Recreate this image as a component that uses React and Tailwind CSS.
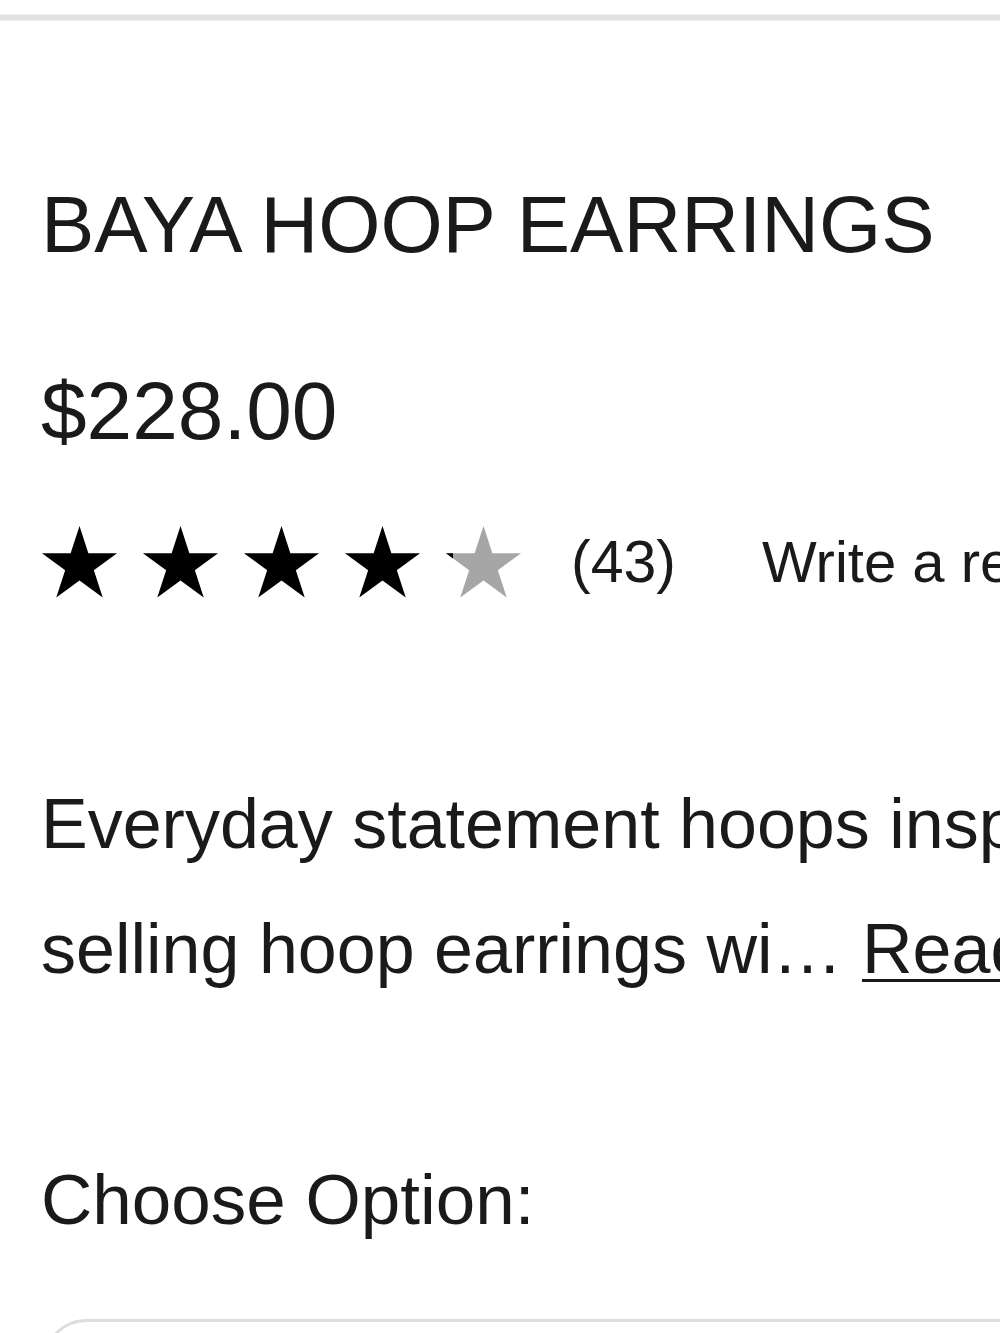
import React from "react";

const STAR_POINTS =
  "39.5,0 48.37,27.3 77.06,27.3 53.85,44.16 62.73,71.46 39.5,54.59 16.27,71.46 25.15,44.16 1.94,27.3 30.63,27.3";

function Star({ filled = true, partial = 0 }) {
  return (
    <svg width="79" height="72" viewBox="0 0 79 72" className="block shrink-0">
      {filled ? (
        <polygon points={STAR_POINTS} fill="#000" />
      ) : (
        <>
          <defs>
            <clipPath id="partial-clip">
              <rect x="0" y="0" width={partial} height="72" />
            </clipPath>
          </defs>
          <polygon points={STAR_POINTS} fill="#a6a6a6" />
          <polygon points={STAR_POINTS} fill="#000" clipPath="url(#partial-clip)" />
        </>
      )}
    </svg>
  );
}

export default function App() {
  return (
    <div
      className="w-[1000px] h-[1333px] overflow-hidden bg-white text-[#1a1a1a]"
      style={{ fontFamily: '"Liberation Sans", Arial, Helvetica, sans-serif' }}
    >
      <div className="mt-[14px] h-[7px] w-full bg-[#e1e1e1] border-y border-[#eeeeee]" />

      <div className="w-[1400px] pl-[41px]">
        <h1 className="mt-[164px] text-[80px] leading-none font-normal whitespace-nowrap">
          BAYA HOOP EARRINGS
        </h1>

        <div className="mt-[105px] text-[82px] leading-none whitespace-nowrap">$228.00</div>

        <div className="mt-[74px] flex items-center ml-[-1px]">
          <div className="flex gap-[22px]">
            <Star />
            <Star />
            <Star />
            <Star />
            <Star filled={false} partial={9} />
          </div>
          <span className="ml-[48px] text-[59px] leading-none whitespace-nowrap">(43)</span>
          <span className="ml-[86px] text-[58px] leading-none whitespace-nowrap">Write a review</span>
        </div>

        <p className="mt-[164px] text-[70px] leading-[125px] whitespace-nowrap">
          Everyday statement hoops inspired by our best-
          <br />
          selling hoop earrings wi…{" "}
          <a className="underline decoration-[3px] underline-offset-[6px]">Read more</a>
        </p>

        <div className="mt-[152px] text-[71px] leading-none whitespace-nowrap">Choose Option:</div>
      </div>

      <div className="mt-[84px] ml-[42px] w-[1200px] h-[200px] rounded-[45px] border-[3px] border-[#dedede]" />
    </div>
  );
}
